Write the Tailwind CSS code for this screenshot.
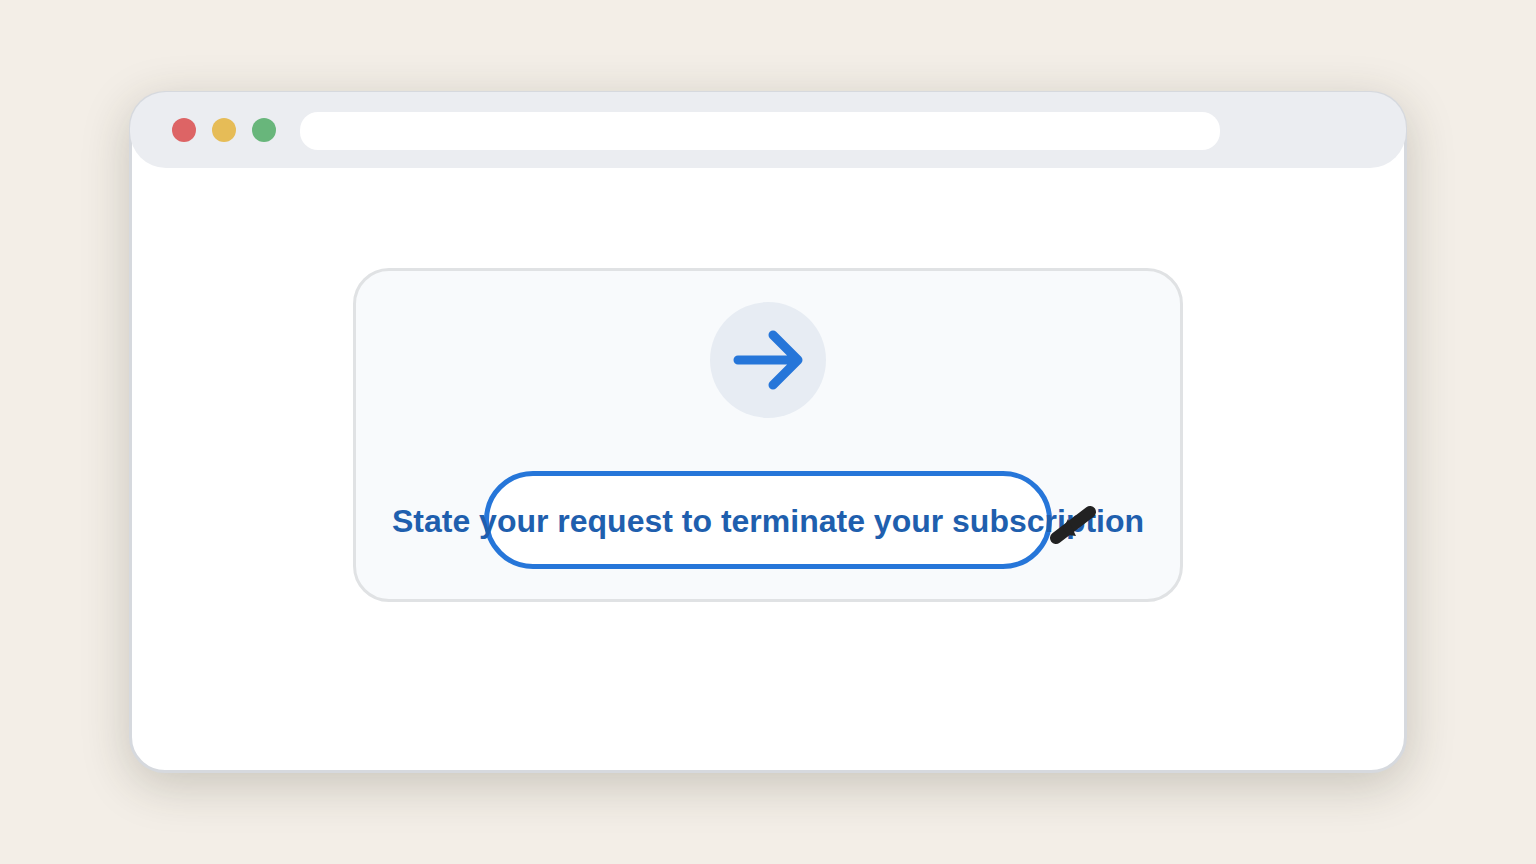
<!DOCTYPE html>
<html lang="en">
<head>
    <meta charset="UTF-8">
    <meta name="viewport" content="width=device-width, initial-scale=1.0">
    <title>Subscription</title>
    <script src="https://cdn.jsdelivr.net/npm/@tailwindcss/browser@4"></script>
</head>
<body class="bg-[#f3eee7] font-['Liberation_Sans',Arial,sans-serif]">
    <div class="flex min-h-screen px-[129px] py-[91px]">
        <div class="flex-1 bg-white border-3 border-[#d6d9de] rounded-[36px] shadow-[0_12px_48px_rgba(50,50,30,0.22)]">
            <!-- title bar -->
            <header class="-mx-0.5 -mt-0.5 h-[76px] flex items-center gap-4 pl-[42px] pr-[186px] bg-[#ebedf1] rounded-[36px]">
                <span class="size-6 rounded-full bg-[#dd6465]"></span>
                <span class="size-6 rounded-full bg-[#e6bc57]"></span>
                <span class="size-6 rounded-full bg-[#68b67b]"></span>
                <input type="text" aria-label="Address" class="flex-1 min-w-0 h-[38px] mt-0.5 ml-2 px-4 bg-white rounded-[18px] outline-none">
            </header>

            <main class="flex justify-center pt-[100px]">
                <section class="w-[830px] flex flex-col items-center pt-[31px] pb-[30px] bg-[#f8fafc] border-3 border-[#e0e2e4] rounded-[36px]">
                    <div class="size-[116px] rounded-full bg-[#e7ecf3]">
                        <svg viewBox="0 0 116 116" class="size-full" fill="none" stroke="#2676d9" stroke-width="9" stroke-linecap="round" stroke-linejoin="round">
                            <path d="M28 58H88M63 33L88 58L63 83" />
                        </svg>
                    </div>

                    <div class="relative mt-[53px]">
                        <button type="button" class="w-[568px] h-[98px] flex items-center justify-center pt-0.5 bg-white border-5 border-[#2676d9] rounded-[49px] text-[32px] leading-9 font-bold text-[#1f5fae] whitespace-nowrap">State your request to terminate your subscription</button>
                        <!-- pen lying over the end of the label -->
                        <svg viewBox="0 0 48 40" class="absolute left-[565px] top-[34px] w-12 h-10 pointer-events-none">
                            <path d="M7 33L41 7" stroke="#222" stroke-width="12" stroke-linecap="round" />
                            <path d="M19 14L27 31L19 30L14 24Z" fill="#222" />
                        </svg>
                    </div>
                </section>
            </main>
        </div>
    </div>
</body>
</html>
